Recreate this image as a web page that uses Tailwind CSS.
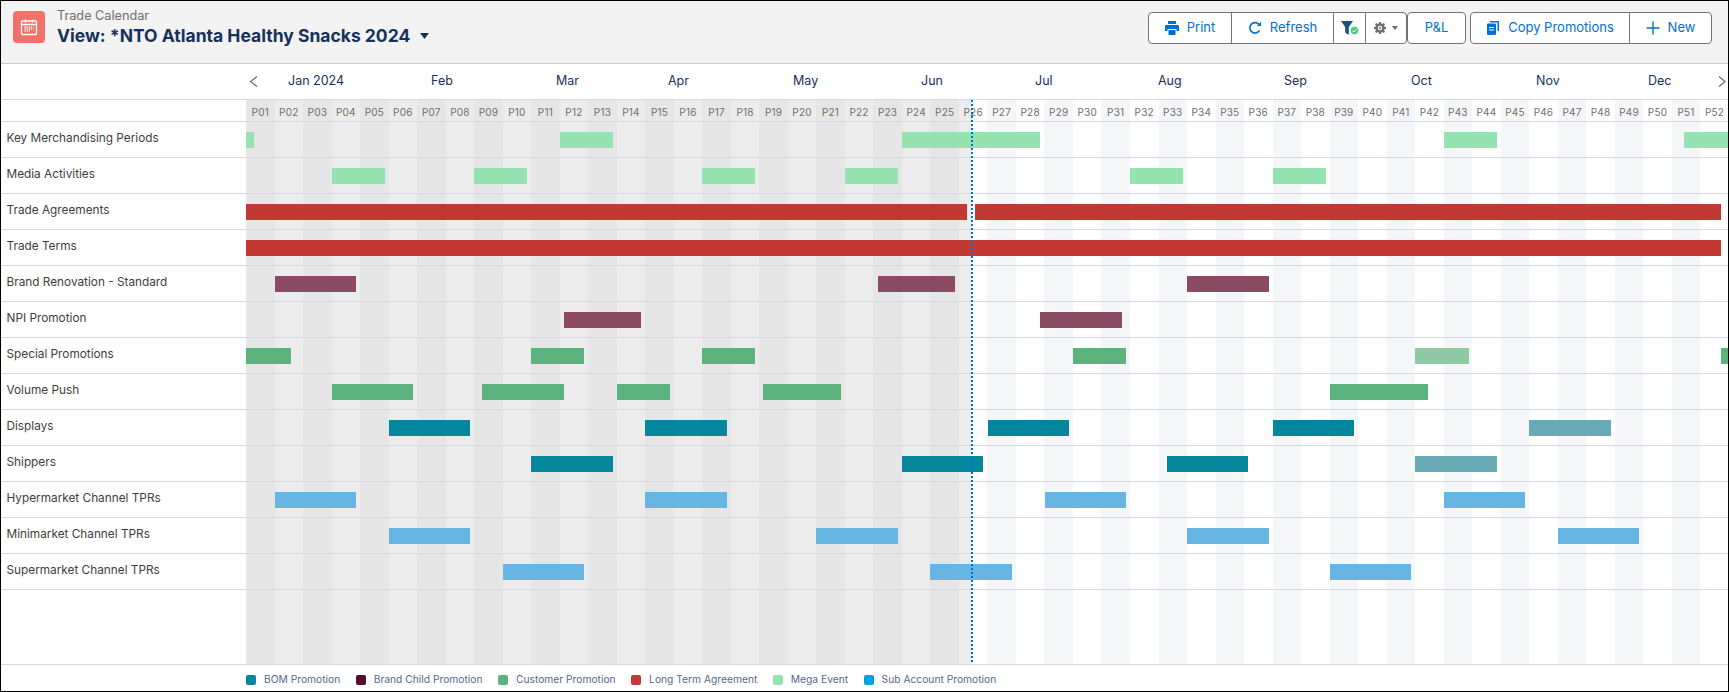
<!DOCTYPE html>
<html lang="en">
<head>
  <meta charset="UTF-8" />
  <title>Trade Calendar</title>
  <script src="https://cdn.jsdelivr.net/npm/@tailwindcss/browser@4"></script>
</head>
<body class="bg-white font-['Inter',sans-serif]">
  <div class="w-[1729px] h-[692px] border border-black flex flex-col overflow-hidden">

    <!-- Page header -->
    <header class="h-[63px] shrink-0 bg-[#f3f3f3] border-b border-[#c9c9c9] flex items-start justify-between pl-3 pr-4">
      <div class="flex items-start gap-3 pt-[7px]">
        <div class="w-8 h-8 mt-[3px] rounded bg-[#f4706a] flex items-center justify-center">
          <svg class="w-5 h-5" viewBox="0 0 20 20" fill="none" stroke="#fff" stroke-width="1.300">
            <rect x="2.500" y="4" width="15" height="13.500" rx="1" />
            <path d="M2.500 7.500h15M6.500 2.500v3M13.500 2.500v3" />
            <path d="M5.500 10h9M5.500 12h9M5.500 14h6" stroke-dasharray="1.200 .9" />
          </svg>
        </div>
        <div>
          <div class="text-[12.700px] leading-4 text-[#706e6b]">Trade Calendar</div>
          <div class="flex items-center gap-[10px] text-[17.500px] leading-6 font-bold text-[#16325c]">
            View: *NTO Atlanta Healthy Snacks 2024
            <svg class="w-[9px] h-[6px]" viewBox="0 0 9 6"><path d="M0 0h9L4.500 6z" fill="#16325c" /></svg>
          </div>
        </div>
      </div>
      <div class="flex pt-[11px] text-[13px] text-[#0070d2]">
        <div class="flex h-8 bg-white border border-[#747474] rounded">
          <button class="w-[83px] flex items-center justify-center gap-2 border-r border-[#747474]">
            <svg class="w-[14px] h-[14px]" viewBox="0 0 14 14" fill="#0070d2"><path d="M3 0h8v3H3zM1.200 4h11.600c.7 0 1.200.5 1.200 1.200V10h-2.500V8h-9v2H0V5.200C0 4.500.5 4 1.200 4zM3.500 9h7v5h-7z" /></svg>
            Print
          </button>
          <button class="w-[102px] flex items-center justify-center gap-2 border-r border-[#747474]">
            <svg class="w-[14px] h-[14px]" viewBox="0 0 14 14" fill="none" stroke="#0070d2" stroke-width="1.600"><path d="M11.500 9.500A5.200 5.200 0 1 1 10.800 3.200" /><path d="M13 .8v4.200H8.800z" fill="#0070d2" stroke="none" /></svg>
            Refresh
          </button>
          <button class="w-8 flex items-center justify-center border-r border-[#747474]">
            <svg class="w-5 h-[14px]" viewBox="0 0 20 14"><path d="M1 0h12L8.800 6v8L5.200 11.500V6z" fill="#1b4f80" /><circle cx="14.500" cy="9.500" r="4.200" fill="#4bca81" stroke="#fff" stroke-width=".8" /><path d="M12.600 9.600l1.400 1.400 2.400-2.600" stroke="#fff" stroke-width="1" fill="none" /></svg>
          </button>
          <button class="w-10 flex items-center justify-center gap-[6px]">
            <svg class="w-3 h-3" viewBox="0 0 12 12"><path fill="#706e6b" fill-rule="evenodd" d="M5 0h2l.3 1.600 1 .4L9.700 1l1.300 1.300-1 1.400.4 1L12 5v2l-1.600.3-.4 1 1 1.400L9.700 11l-1.400-1-1 .4L7 12H5l-.3-1.600-1-.4-1.400 1L1 9.700l1-1.400-.4-1L0 7V5l1.600-.3.4-1-1-1.400L2.300 1l1.400 1 1-.4zM6 3.800a2.200 2.200 0 1 0 0 4.400 2.200 2.200 0 0 0 0-4.400z" /><circle cx="6" cy="6" r="1.100" fill="#706e6b" /></svg>
            <svg class="w-[6px] h-1" viewBox="0 0 6 4"><path d="M0 0h6L3 4z" fill="#706e6b" /></svg>
          </button>
        </div>
        <button class="w-[59px] h-8 bg-white border border-[#747474] rounded">P&amp;L</button>
        <div class="flex h-8 ml-1 bg-white border border-[#747474] rounded">
          <button class="w-[159px] flex items-center justify-center gap-2 border-r border-[#747474]">
            <svg class="w-[14px] h-[14px]" viewBox="0 0 14 14" fill="#0070d2"><path d="M4 0h8a1 1 0 0 1 1 1v9h-1.500V1.500H4z" /><path fill-rule="evenodd" d="M2 2.500h7a1 1 0 0 1 1 1V13a1 1 0 0 1-1 1H2a1 1 0 0 1-1-1V3.500a1 1 0 0 1 1-1zM3 6v1h5V6zm0 2.500v1h5v-1z" /></svg>
            Copy Promotions
          </button>
          <button class="w-[81px] flex items-center justify-center gap-2">
            <svg class="w-[14px] h-[14px]" viewBox="0 0 14 14" stroke="#0070d2" stroke-width="1.400"><path d="M7 .5v13M.5 7h13" /></svg>
            New
          </button>
        </div>
      </div>
    </header>

    <!-- Months -->
    <div class="h-9 shrink-0 flex items-center border-b border-[#d4d7e5] text-[12.500px] text-[#16325c]">
      <svg class="ml-[248px] mr-[30px] w-[9px] h-[11px] shrink-0" viewBox="0 0 9 11" fill="none" stroke="#706e6b" stroke-width="1.300"><path d="M8 .5L1.500 5.500 8 10.500" /></svg>
      <div id="months" class="flex flex-1"></div>
      <svg class="mr-[2px] w-[8px] h-[11px] shrink-0" viewBox="0 0 8 11" fill="none" stroke="#706e6b" stroke-width="1.300"><path d="M1 .5l6 5-6 5" /></svg>
    </div>

    <!-- Body -->
    <div class="flex flex-1 min-h-0">
      <div id="labels" class="w-[245px] shrink-0 flex flex-col text-[11.800px] text-[#3e3e3c]">
        <div class="h-[22px] border-b border-[#d4d7e5]"></div>
      </div>
      <div class="flex-1 relative overflow-hidden">
        <div id="bands" class="absolute top-0 bottom-0 left-0 w-[1483px] flex"></div>
        <div id="periods" class="relative h-[22px] w-[1483px] flex pt-[3px] border-b border-[#d4d7e5] text-[10px] tracking-[0.2px] text-[#706e6b]"></div>
        <div id="rows" class="relative"></div>
        <div class="absolute top-0 bottom-0 left-[725px] w-[2px] bg-[repeating-linear-gradient(to_bottom,#0070d2_0,#0070d2_2px,transparent_2px,transparent_4px)]"></div>
      </div>
    </div>

    <!-- Legend -->
    <div class="h-[27px] shrink-0 border-t border-[#d4d7e5] flex items-center pl-[245px] pt-1 text-[10.250px] text-[#54698d]">
      <div class="flex items-center gap-2 mr-[15.500px]"><span class="w-[10px] h-[10px] rounded-[2px] bg-[#04879c]"></span>BOM Promotion</div>
      <div class="flex items-center gap-2 mr-[15.500px]"><span class="w-[10px] h-[10px] rounded-[2px] bg-[#5c0a2e]"></span>Brand Child Promotion</div>
      <div class="flex items-center gap-2 mr-[15.500px]"><span class="w-[10px] h-[10px] rounded-[2px] bg-[#5db37d]"></span>Customer Promotion</div>
      <div class="flex items-center gap-2 mr-[15.500px]"><span class="w-[10px] h-[10px] rounded-[2px] bg-[#c23934]"></span>Long Term Agreement</div>
      <div class="flex items-center gap-2 mr-[15.500px]"><span class="w-[10px] h-[10px] rounded-[2px] bg-[#94e3b0]"></span>Mega Event</div>
      <div class="flex items-center gap-2 mr-[15.500px]"><span class="w-[10px] h-[10px] rounded-[2px] bg-[#00a1e0]"></span>Sub Account Promotion</div>
    </div>
  </div>

  <script>
    const months = [["Jan 2024", 143], ["Feb", 125], ["Mar", 112], ["Apr", 125], ["May", 128], ["Jun", 114], ["Jul", 123], ["Aug", 126], ["Sep", 127], ["Oct", 125], ["Nov", 112], ["Dec", 60]];
    const mega = "bg-[#94e3b0]", red = "bg-[#c23934]", plum = "bg-[#8b4b63]", green = "bg-[#5db37d]", teal = "bg-[#04879c]", blue = "bg-[#66b5e3]";
    const greenLight = "bg-[#8fc9a4]", tealLight = "bg-[#68aab6]";

    // start / end are page x coordinates
    const rows = [
      ["Key Merchandising Periods", [[246, 254, mega], [560, 613, mega], [902, 1040, mega], [1444, 1497, mega], [1684, 1728, mega]]],
      ["Media Activities", [[332, 385, mega], [474, 527, mega], [702, 755, mega], [845, 898, mega], [1130, 1183, mega], [1273, 1326, mega]]],
      ["Trade Agreements", [[246, 967, red], [975, 1721, red]]],
      ["Trade Terms", [[246, 1721, red]]],
      ["Brand Renovation - Standard", [[275, 356, plum], [878, 955, plum], [1187, 1269, plum]]],
      ["NPI Promotion", [[564, 641, plum], [1040, 1122, plum]]],
      ["Special Promotions", [[246, 291, green], [531, 584, green], [702, 755, green], [1073, 1126, green], [1415, 1469, greenLight], [1721, 1728, green]]],
      ["Volume Push", [[332, 413, green], [482, 564, green], [617, 670, green], [763, 841, green], [1330, 1428, green]]],
      ["Displays", [[389, 470, teal], [645, 727, teal], [988, 1069, teal], [1273, 1354, teal], [1529, 1611, tealLight]]],
      ["Shippers", [[531, 613, teal], [902, 983, teal], [1167, 1248, teal], [1415, 1497, tealLight]]],
      ["Hypermarket Channel TPRs", [[275, 356, blue], [645, 727, blue], [1045, 1126, blue], [1444, 1525, blue]]],
      ["Minimarket Channel TPRs", [[389, 470, blue], [816, 898, blue], [1187, 1269, blue], [1558, 1639, blue]]],
      ["Supermarket Channel TPRs", [[503, 584, blue], [930, 1012, blue], [1330, 1411, blue]]],
    ];

    const monthsEl = document.getElementById("months");
    months.forEach(([name, width]) => {
      const el = document.createElement("div");
      el.className = "shrink-0";
      el.style.width = width + "px";
      el.textContent = name;
      monthsEl.appendChild(el);
    });

    const bandsEl = document.getElementById("bands");
    const periodsEl = document.getElementById("periods");
    for (let i = 0; i < 52; i++) {
      const band = document.createElement("div");
      const even = i % 2 === 0;
      if (i < 25) band.className = "flex-1 " + (even ? "bg-[#e6e6e6]" : "bg-[#ececec]");
      else band.className = "flex-1 " + (even ? "bg-[#f5f6f8]" : "bg-white");
      if (i === 25) band.innerHTML = '<div class="w-[13px] h-full bg-[#ececec]"></div>';
      bandsEl.appendChild(band);

      const period = document.createElement("div");
      period.className = "flex-1 flex items-center justify-center";
      period.textContent = "P" + String(i + 1).padStart(2, "0");
      periodsEl.appendChild(period);
    }

    const labelsEl = document.getElementById("labels");
    const rowsEl = document.getElementById("rows");
    rows.forEach(([name, bars]) => {
      const label = document.createElement("div");
      label.className = "h-9 shrink-0 flex items-center pl-[5.500px] pb-[2px] border-b border-[#d4d7e5]";
      label.textContent = name;
      labelsEl.appendChild(label);

      const row = document.createElement("div");
      row.className = "h-9 relative border-b border-[#d4d7e5]";
      bars.forEach(([start, end, color]) => {
        const bar = document.createElement("div");
        bar.className = "absolute top-[10px] h-4 " + color;
        bar.style.left = start - 246 + "px";
        bar.style.width = end - start + "px";
        row.appendChild(bar);
      });
      rowsEl.appendChild(row);
    });
  </script>
</body>
</html>
